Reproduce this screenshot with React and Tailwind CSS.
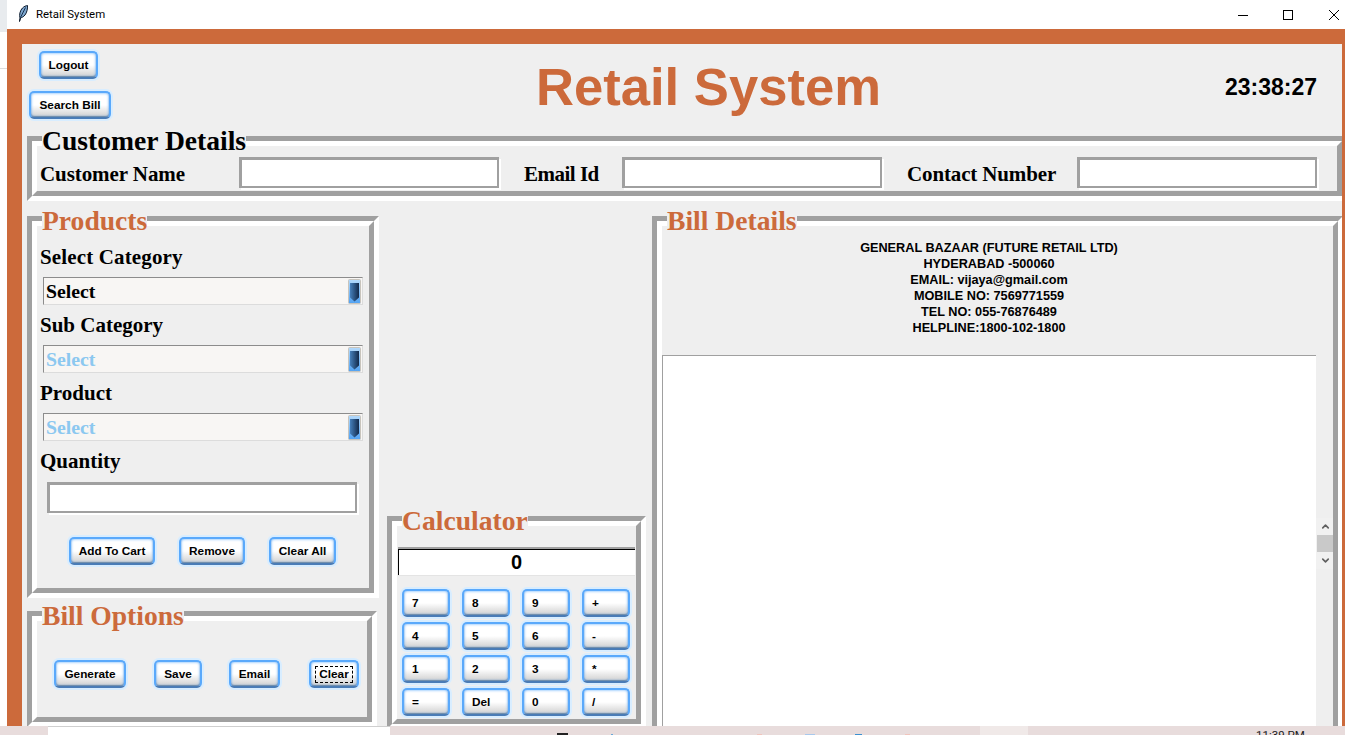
import { ChevronUp, ChevronDown } from 'lucide-react'

const sans = "font-['Liberation_Sans',Arial,sans-serif]"
const serif = "font-['Liberation_Serif','Times_New_Roman',serif]"

function Frame({ title, titleColor = 'text-[#cc6a3b]', className = '', children }) {
  return (
    <div className={`border-[5px] border-t-[#a0a0a0] border-l-[#a0a0a0] border-r-white border-b-white shrink-0 ${className}`}>
      <div className="relative h-full border-[5px] border-t-white border-l-white border-r-[#a0a0a0] border-b-[#a0a0a0]">
        <div className={`absolute left-[5px] -top-[21px] bg-[#efefef] text-[27.6px] leading-[31px] font-bold whitespace-nowrap ${serif} ${titleColor}`}>
          {title}
        </div>
        {children}
      </div>
    </div>
  )
}

function Btn({ label, className = '', focused = false }) {
  return (
    <button className={`flex items-center h-[28px] pt-[1px] rounded-[5px] border-2 border-[#5aa9fb] border-b-[#4a7cb6] bg-gradient-to-b from-white via-white to-[#cfcfcf] shadow-[0_0_0_2px_#d8edff,inset_0_0_3px_#5aa9fb,inset_0_-1px_1px_#7a7a7a] text-[11.8px] font-bold text-black shrink-0 ${sans} ${className}`}>
      {focused ? (
        <span className="w-[38px] h-[17px] flex items-center justify-center border border-dashed border-black">{label}</span>
      ) : label}
    </button>
  )
}

function Entry({ className = '' }) {
  return (
    <input
      type="text"
      className={`block bg-white border-t-[3px] border-l-[3px] border-r-[2px] border-b-[2px] border-[#a0a0a0] shadow-[2px_2px_0_#fff] shrink-0 ${className}`}
    />
  )
}

function Combo({ disabled = false }) {
  return (
    <div className="ml-[6px] w-[320px] h-[28px] flex items-center justify-between bg-[#f8f6f4] border border-t-[#8c8c8c] border-l-[#8c8c8c] border-r-[#dcdcdc] border-b-[#dcdcdc] pl-[2px] pr-[1px]">
      <span className={`text-[19.8px] leading-none font-bold pt-[1px] ${serif} ${disabled ? 'text-[#8cc8f0]' : 'text-black'}`}>Select</span>
      <svg width="13" height="25" viewBox="0 0 13 25">
        <defs>
          <linearGradient id="comboBg" x1="0" y1="0" x2="0" y2="1">
            <stop offset="0" stopColor="#b4dafc" />
            <stop offset="1" stopColor="#52a2f2" />
          </linearGradient>
          <linearGradient id="comboArrow" x1="0" y1="0" x2="1" y2="0">
            <stop offset="0" stopColor="#4680bc" />
            <stop offset="1" stopColor="#12294a" />
          </linearGradient>
        </defs>
        <rect x="0.5" y="0.5" width="12" height="24" rx="1" fill="url(#comboBg)" stroke="#c8c4bc" />
        <path d="M2 4H11V18.5L6.5 22.5L2 18.5Z" fill="url(#comboArrow)" />
      </svg>
    </div>
  )
}

function Label({ children, className = '' }) {
  return <div className={`text-[21px] leading-[24px] font-bold text-black whitespace-nowrap ${serif} ${className}`}>{children}</div>
}

const billLines = [
  'GENERAL BAZAAR (FUTURE RETAIL LTD)',
  'HYDERABAD -500060',
  'EMAIL: vijaya@gmail.com',
  'MOBILE NO: 7569771559',
  'TEL NO: 055-76876489',
  'HELPLINE:1800-102-1800',
]

const calcKeys = ['7', '8', '9', '+', '4', '5', '6', '-', '1', '2', '3', '*', '=', 'Del', '0', '/']

function TitleBar() {
  return (
    <div className="h-[29px] bg-white flex items-center shrink-0">
      <svg className="ml-[11px] mb-[2px]" width="10" height="17" viewBox="0 0 10 17">
        <path d="M1.5 16.5L2 13C1 10 2 5.5 4.5 3C6 1.5 8 .7 9.5 .5C9.7 3.5 9 7.5 7 10C5.5 11.8 4 12.5 2.7 12.8L1.5 16.5Z" fill="#7fa8d0" stroke="#0c1a2c" strokeWidth="1" />
        <path d="M7.5 2.5L2.5 12.5" stroke="#15304e" strokeWidth="1" fill="none" />
      </svg>
      <span className="ml-[8px] text-[11.4px] text-black font-['Roboto',sans-serif]">Retail System</span>
      <div className="ml-auto flex items-center">
        <svg className="mr-[35px]" width="10" height="10" viewBox="0 0 10 10"><path d="M0 5.5H10" stroke="#000" /></svg>
        <svg className="mr-[36px]" width="10" height="10" viewBox="0 0 10 10"><rect x=".5" y=".5" width="9" height="9" fill="none" stroke="#000" /></svg>
        <svg className="mr-[6px]" width="10" height="10" viewBox="0 0 10 10"><path d="M0 0L10 10M10 0L0 10" stroke="#000" /></svg>
      </div>
    </div>
  )
}

function Taskbar() {
  return (
    <div className="h-[9px] flex shrink-0 overflow-hidden">
      <div className="w-[48px] bg-[#e8dcdc]" />
      <div className="w-[342px] bg-white border-t border-[#cfcfcf]" />
      <div className="w-[590px] bg-[#e8dcdc] flex items-end">
        <div className="ml-[167px] w-[11px] h-[2px] bg-[#222]" />
        <div className="ml-[43px] w-[2px] h-[1px] bg-[#6aa8d8]" />
        <div className="ml-[144px] w-[5px] h-[1px] bg-[#f0c4bc]" />
        <div className="ml-[43px] w-[10px] h-[1px] bg-[#a8c8ec]" />
        <div className="ml-[40px] w-[7px] h-[1px] bg-[#3c90d0]" />
        <div className="ml-[43px] w-[5px] h-[1px] bg-[#f0c4bc]" />
      </div>
      <div className="w-[48px] bg-[#f0e9e8]" />
      <div className="flex-1 bg-[#e8dcdc] pl-[228px] pt-[2px]">
        <div className="text-[11.5px] leading-[14px] text-[#222] font-['Roboto',sans-serif] whitespace-nowrap">11:39 PM</div>
      </div>
    </div>
  )
}

export default function App() {
  return (
    <div className="w-[1345px] h-[735px] flex flex-col overflow-hidden bg-white">
      <div className="h-[726px] flex shrink-0">
        <div className="w-[7px] shrink-0 flex flex-col">
          <div className="h-[32px] bg-[#e8ebee]" />
          <div className="h-[37px] bg-white border-b border-[#dddddd]" />
        </div>
        <div className="flex-1 flex flex-col min-w-0">
          <TitleBar />
          <div className="flex-1 min-h-0 bg-[#cc6a3b] pl-[15px] pt-[15px] pr-[3px]">
            <div className="h-full bg-[#efefef] overflow-hidden">
              {/* header */}
              <div className="h-[92px] flex items-center">
                <div className="w-[514px] h-full shrink-0 flex flex-col items-start pl-[7px] pt-[7px] gap-[12px]">
                  <Btn label="Logout" className="ml-[10px] w-[59px] justify-center" />
                  <Btn label="Search Bill" className="w-[82px] justify-center" />
                </div>
                <h1 className={`text-[52.6px] leading-none font-bold text-[#cc6a3b] whitespace-nowrap w-[343px] mb-[6px] ${sans}`}>Retail System</h1>
                <div className={`ml-[346px] mb-[6px] text-[23px] font-bold text-black ${sans}`}>23:38:27</div>
              </div>

              {/* customer details */}
              <Frame title="Customer Details" titleColor="text-black" className="ml-[5px] w-[1320px] h-[65px]">
                <div className="flex items-start pt-[11px]">
                  <Label className="w-[202px] pl-[3px] pt-[5px] tracking-[-0.08px]">Customer Name</Label>
                  <Entry className="w-[260px] h-[31px]" />
                  <Label className="ml-[25px] w-[98px] pt-[5px] tracking-[-0.5px]">Email Id</Label>
                  <Entry className="w-[260px] h-[31px]" />
                  <Label className="ml-[25px] w-[170px] pt-[5px] tracking-[-0.14px]">Contact Number</Label>
                  <Entry className="w-[240px] h-[31px]" />
                </div>
              </Frame>

              <div className="flex items-start mt-[15px] pl-[5px]">
                {/* left column */}
                <div className="w-[352px] shrink-0">
                  <Frame title="Products" className="w-[352px] h-[382px]">
                    <div className="pt-[19px] flex flex-col">
                      <Label className="pl-[3px] mb-[8px] tracking-[0.14px]">Select Category</Label>
                      <Combo />
                      <Label className="pl-[3px] mt-[8px] mb-[8px]">Sub Category</Label>
                      <Combo disabled />
                      <Label className="pl-[3px] mt-[8px] mb-[8px]">Product</Label>
                      <Combo disabled />
                      <Label className="pl-[3px] mt-[8px]">Quantity</Label>
                      <Entry className="ml-[10px] mt-[9px] w-[310px] h-[31px]" />
                      <div className="flex mt-[24px] ml-[32px]">
                        <Btn label="Add To Cart" className="w-[86px] justify-center" />
                        <Btn label="Remove" className="ml-[24px] w-[66px] justify-center" />
                        <Btn label="Clear All" className="ml-[24px] w-[67px] justify-center" />
                      </div>
                    </div>
                  </Frame>
                  <Frame title="Bill Options" className="mt-[13px] w-[350px] h-[116px]">
                    <div className="flex pt-[39px] pl-[17px]">
                      <Btn label="Generate" className="w-[72px] justify-center" />
                      <Btn label="Save" className="ml-[28px] w-[48px] justify-center" />
                      <Btn label="Email" className="ml-[27px] w-[51px] justify-center" />
                      <Btn label="Clear" focused className="ml-[29px] w-[50px] justify-center" />
                    </div>
                  </Frame>
                </div>

                {/* calculator */}
                <Frame title="Calculator" className="ml-[8px] mt-[300px] w-[259px] h-[213px]">
                  <div className="pt-[21px] pl-[1px]">
                    <div className="w-[237px] h-[29px] border-t-2 border-b border-t-[#a0a0a0] border-b-[#e4e4e4]">
                      <div className={`h-full bg-white border-t border-l border-black text-center text-[20px] leading-[25px] font-bold text-black pr-[1px] ${sans}`}>0</div>
                    </div>
                    <div className="grid grid-cols-[repeat(4,48px)] gap-x-[12px] gap-y-[5px] mt-[13px] ml-[4px]">
                      {calcKeys.map((k) => (
                        <Btn key={k} label={k} className="w-[48px] pl-[8px] justify-start" />
                      ))}
                    </div>
                  </div>
                </Frame>

                {/* bill */}
                <Frame title="Bill Details" className="ml-[6px] w-[691px] h-[600px]">
                  <div className="h-full flex flex-col">
                    <div className={`h-[129px] w-[654px] shrink-0 pt-[14px] text-center text-[12.7px] leading-[16px] font-bold text-black ${sans}`}>
                      {billLines.map((l) => <div key={l}>{l}</div>)}
                    </div>
                    <div className="flex-1 flex min-h-0">
                      <div className="w-[654px] bg-white border-t border-l border-[#a0a0a0]" />
                      <div className="w-[17px] pt-[163px]">
                        <div className="h-[51px] bg-[#f1f1f1] flex flex-col items-center pl-[1px]">
                          <ChevronUp className="w-[11px] h-[17px] text-[#606060]" strokeWidth={3.5} />
                          <div className="w-[16px] h-[17px] bg-[#c9c9c9]" />
                          <ChevronDown className="w-[11px] h-[17px] text-[#606060]" strokeWidth={3.5} />
                        </div>
                      </div>
                    </div>
                  </div>
                </Frame>
              </div>
            </div>
          </div>
        </div>
      </div>
      <Taskbar />
    </div>
  )
}
